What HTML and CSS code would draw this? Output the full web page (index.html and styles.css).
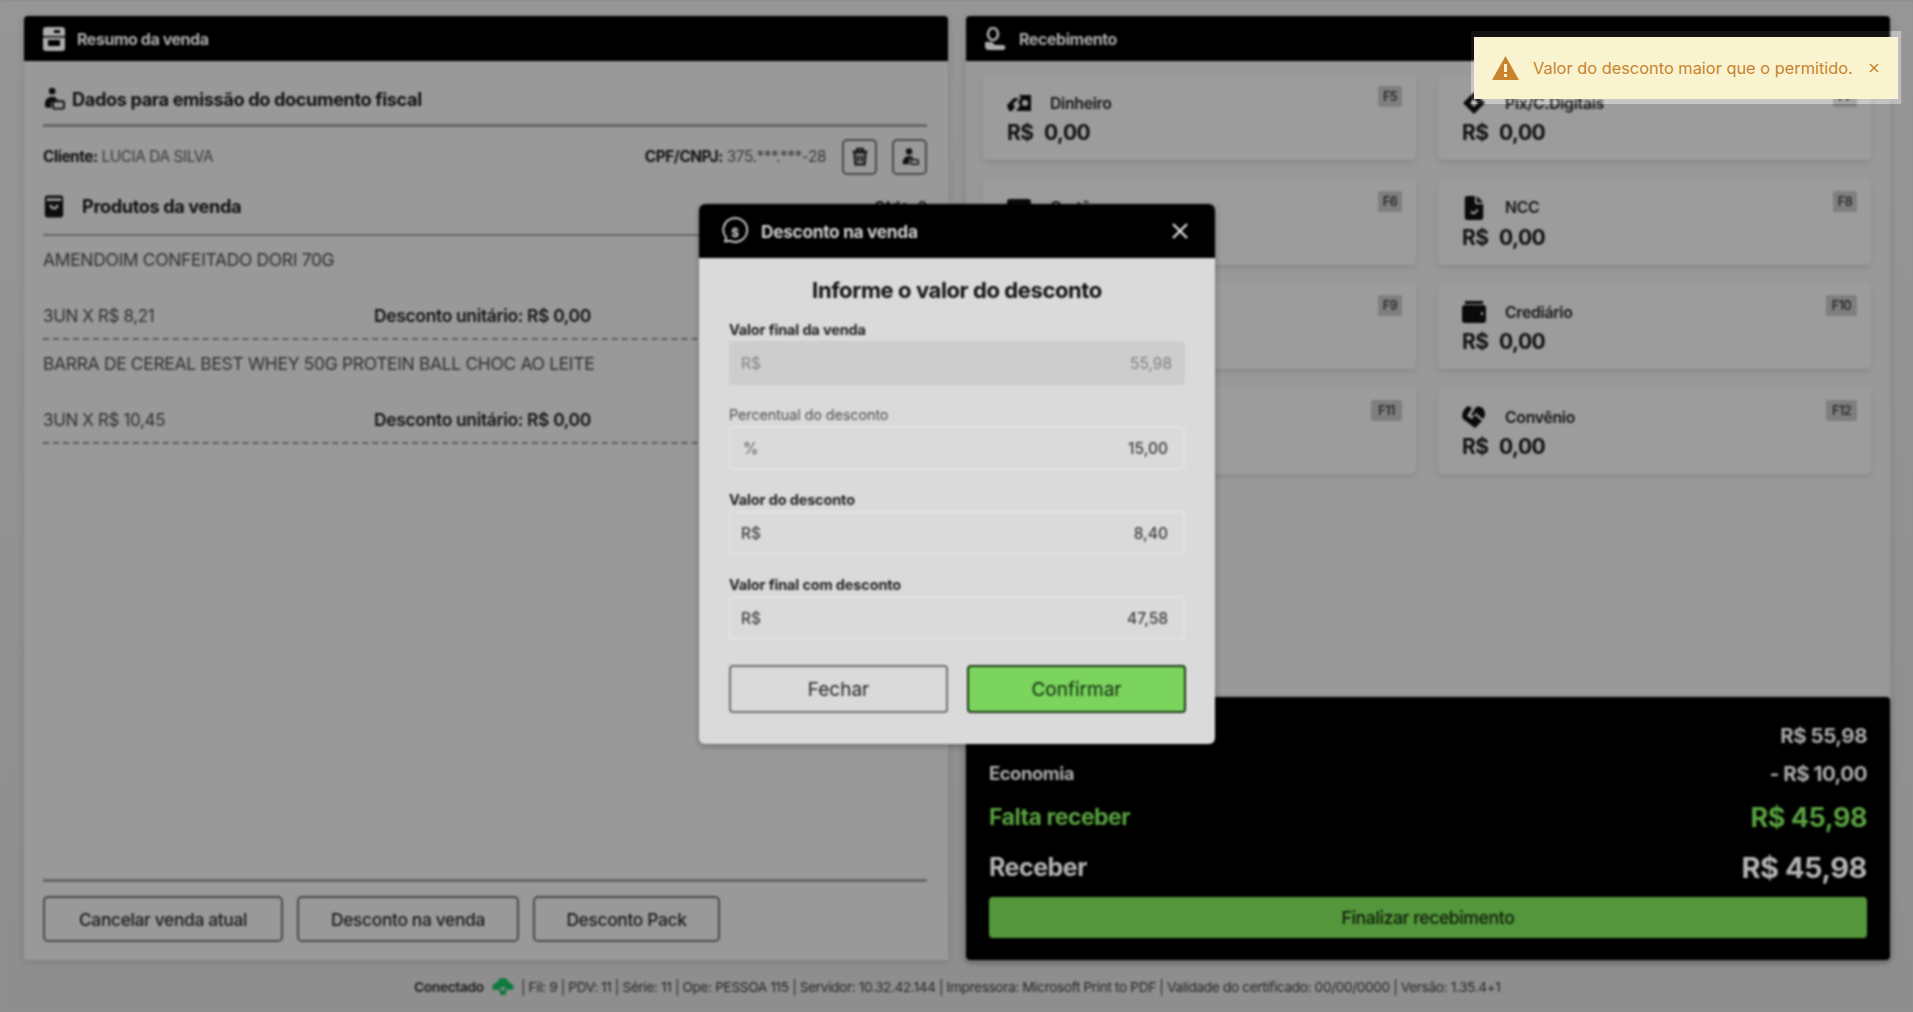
FILE: index.html
```html
<!DOCTYPE html>
<html lang="pt-BR">
<head>
<meta charset="utf-8">
<title>Desconto na venda</title>
<link rel="stylesheet" href="styles.css">
</head>
<body>
<div class="stage">
  <div class="app">
    <main class="columns">
      <section class="panel">
        <header class="bar">
          <svg class="bar-icon" viewBox="0 0 24 24"><path fill="currentColor" fill-rule="evenodd" d="M4 0h16a3 3 0 0 1 3 3v18a3 3 0 0 1-3 3H4a3 3 0 0 1-3-3V3a3 3 0 0 1 3-3zM1 9v1.500h22V9zM6 13v6h12v-6zM12 3v3h6V3z"/></svg>
          <span>Resumo da venda</span>
        </header>
        <div class="panel-body">
          <div class="section-head fiscal">
            <svg class="sec-icon" viewBox="0 0 24 24"><circle cx="10" cy="4" r="3.600" fill="currentColor"/><path fill="currentColor" d="M2 20c0-6 2-10 8-10 4 0 5.500 2 6 5h-4a3 3 0 0 0-3 3v4H4a2 2 0 0 1-2-2z"/><rect x="11" y="15" width="12" height="8" rx="1.500" fill="none" stroke="currentColor" stroke-width="2"/></svg>
            <h2>Dados para emissão do documento fiscal</h2>
          </div>
          <div class="client">
            <div><b>Cliente:</b> <span class="soft">LUCIA DA SILVA</span></div>
            <div class="client-right">
              <div><b>CPF/CNPJ:</b> <span class="soft">375.***.***-28</span></div>
              <button class="square"><svg viewBox="0 0 24 24"><path fill="none" stroke="currentColor" stroke-width="2.400" d="M6 7h12l-1 13H7zM4 6h16M9 5V3h6v2M10 10v7M14 10v7"/></svg></button>
              <button class="square"><svg viewBox="0 0 24 24"><circle cx="11" cy="6" r="3.500" fill="currentColor"/><path fill="currentColor" d="M4 19c0-5 3-8 7-8 3 0 4 1 5 3h-3a2 2 0 0 0-2 2v4H5a1 1 0 0 1-1-1z"/><rect x="13" y="15" width="8" height="5" rx="1" fill="none" stroke="currentColor" stroke-width="1.600"/></svg></button>
            </div>
          </div>
          <div class="section-head products">
            <svg class="sec-icon" viewBox="0 0 24 24"><path fill="currentColor" fill-rule="evenodd" d="M5 0h14a3 3 0 0 1 3 3v18a3 3 0 0 1-3 3H5a3 3 0 0 1-3-3V3a3 3 0 0 1 3-3zM4 3v3h16V3zM7 10c0 7 10 7 10 0h-2.500c0 3.500-5 3.500-5 0z"/></svg>
            <h2>Produtos da venda</h2>
            <span class="count">Qtde: 2</span>
          </div>
          <article class="item">
            <div class="item-name">AMENDOIM CONFEITADO DORI 70G</div>
            <div class="item-row"><span>3UN X R$ 8,21</span><b>Desconto unitário: R$ 0,00</b></div>
          </article>
          <article class="item">
            <div class="item-name">BARRA DE CEREAL BEST WHEY 50G PROTEIN BALL CHOC AO LEITE</div>
            <div class="item-row"><span>3UN X R$ 10,45</span><b>Desconto unitário: R$ 0,00</b></div>
          </article>
          <footer class="panel-foot">
            <button class="outline wide-a">Cancelar venda atual</button>
            <button class="outline wide-b">Desconto na venda</button>
            <button class="outline wide-c">Desconto Pack</button>
          </footer>
        </div>
      </section>

      <section class="panel">
        <header class="bar">
          <svg class="bar-icon" viewBox="0 0 24 24"><ellipse cx="9" cy="7" rx="5" ry="6" fill="none" stroke="currentColor" stroke-width="2.600"/><path fill="currentColor" d="M1 15h7l3 3h8a2.500 2.500 0 0 1 0 5H5a4 4 0 0 1-4-4z"/></svg>
          <span>Recebimento</span>
        </header>
        <div class="cards">
          <div class="card"><kbd>F5</kbd><div class="card-title"><svg viewBox="0 0 24 18"><path fill="currentColor" d="M0 11 7 4h5L6 10l2 3-3 4H2z"/><path fill="currentColor" fill-rule="evenodd" d="M12 1h12v16H9l3-4 1-2-2-3 3-4zM18 6a3 3 0 1 0 0 6 3 3 0 0 0 0-6z"/></svg><span>Dinheiro</span></div><div class="amount">R$ <i>0,00</i></div></div>
          <div class="card"><kbd>F7</kbd><div class="card-title"><svg viewBox="0 0 24 24"><path fill="currentColor" fill-rule="evenodd" d="M12 1 23 12 12 23 1 12zM12 8l-4 4 4 4 4-4z"/></svg><span>Pix/C.Digitais</span></div><div class="amount">R$ <i>0,00</i></div></div>
          <div class="card"><kbd>F6</kbd><div class="card-title"><svg viewBox="0 0 24 20"><rect y="1" width="24" height="18" rx="3" fill="currentColor"/></svg><span>Cartão</span></div><div class="amount">R$ <i>0,00</i></div></div>
          <div class="card"><kbd>F8</kbd><div class="card-title"><svg viewBox="0 0 20 26"><path fill="currentColor" fill-rule="evenodd" d="M3 0h8v7a2 2 0 0 0 2 2h7v14a3 3 0 0 1-3 3H3a3 3 0 0 1-3-3V3a3 3 0 0 1 3-3zM13 0l7 7h-7zM6 17c2 4 6 4 9-2l-2-1c-2 4-4 4-5 2z"/></svg><span>NCC</span></div><div class="amount">R$ <i>0,00</i></div></div>
          <div class="card"><kbd>F9</kbd><div class="card-title"><svg viewBox="0 0 24 24"><rect y="3" width="24" height="18" rx="3" fill="currentColor"/></svg><span>Cheque</span></div><div class="amount">R$ <i>0,00</i></div></div>
          <div class="card"><kbd class="wide">F10</kbd><div class="card-title"><svg viewBox="0 0 24 22"><path fill="currentColor" fill-rule="evenodd" d="M3 0h18v3H3zM3 4h18a3 3 0 0 1 3 3v12a3 3 0 0 1-3 3H3a3 3 0 0 1-3-3V7a3 3 0 0 1 3-3zM19 11v3h2v-3z"/></svg><span>Crediário</span></div><div class="amount">R$ <i>0,00</i></div></div>
          <div class="card"><kbd class="wide">F11</kbd><div class="card-title"><svg viewBox="0 0 24 24"><rect y="3" width="24" height="18" rx="3" fill="currentColor"/></svg><span>Vale</span></div><div class="amount">R$ <i>0,00</i></div></div>
          <div class="card"><kbd class="wide">F12</kbd><div class="card-title"><svg viewBox="0 0 24 24"><path fill="currentColor" fill-rule="evenodd" d="M6 1l4 2-5 8 5 3 3-4 7 6-7 7-12-9C-1 11 1 4 6 1zM14 2c4-2 9 1 9 7 0 2-1 4-2 5l-7-6-3 3-2-1z"/></svg><span>Convênio</span></div><div class="amount">R$ <i>0,00</i></div></div>
        </div>
        <div class="summary">
          <div class="sum-row"><span>Total</span><span>R$ 55,98</span></div>
          <div class="sum-row"><span>Economia</span><span>- R$ 10,00</span></div>
          <div class="sum-row due"><span>Falta receber</span><span>R$ 45,98</span></div>
          <div class="sum-row take"><span>Receber</span><span>R$ 45,98</span></div>
          <button class="finish">Finalizar recebimento</button>
        </div>
      </section>
    </main>
    <div class="status">
      <b>Conectado</b>
      <svg class="cloud" viewBox="0 0 24 20"><path fill="#0e7a3e" fill-rule="evenodd" d="M12 0c4 0 6 2.500 6.500 5 3 .5 5.500 2.500 5.500 5.500 0 1.500-1 2.500-2.500 2.500H16l-1 6H9l-1-6H2.500C1 13 0 12 0 10.500 0 7.500 2.500 5.500 5.500 5 6 2.500 8 0 12 0zM9 10l3 5 3-5z"/></svg>
      <span>| Fil: 9 | PDV: 11 | Série: 11 | Ope: PESSOA 115 | Servidor: 10.32.42.144 | Impressora: Microsoft Print to PDF | Validade do certificado: 00/00/0000 | Versão: 1.35.4+1</span>
    </div>
  </div>

  <div class="modal">
    <header class="modal-bar">
      <svg class="modal-icon" viewBox="0 0 28 28"><path fill="none" stroke="currentColor" stroke-width="1.800" d="M5 23.500l1-3.500a11.500 11.500 0 1 1 4 3z"/><text x="14.500" y="19" text-anchor="middle" class="dollar">$</text></svg>
      <span>Desconto na venda</span>
      <svg class="modal-close" viewBox="0 0 18 18"><path fill="none" stroke="currentColor" stroke-width="2.200" d="M2 2l14 14M16 2 2 16"/></svg>
    </header>
    <div class="modal-body">
      <h3>Informe o valor do desconto</h3>
      <label class="field-label">Valor final da venda</label>
      <div class="field disabled"><span>R$</span><span>55,98</span></div>
      <label class="field-label thin">Percentual do desconto</label>
      <div class="field"><span class="pct">%</span><span>15,00</span></div>
      <label class="field-label">Valor do desconto</label>
      <div class="field"><span>R$</span><span>8,40</span></div>
      <label class="field-label">Valor final com desconto</label>
      <div class="field"><span>R$</span><span>47,58</span></div>
      <div class="modal-actions">
        <button class="btn-close">Fechar</button>
        <button class="btn-ok">Confirmar</button>
      </div>
    </div>
  </div>
</div>

<div class="toast-halo">
  <div class="toast">
    <svg class="toast-icon" viewBox="0 0 27 24"><path fill="#c8842d" fill-rule="evenodd" d="M13.500 0 27 24H0zM12 8v8h3V8zM12 18v3h3v-3z"/></svg>
    <span>Valor do desconto maior que o permitido.</span>
    <svg class="toast-x" viewBox="0 0 10 10"><path fill="none" stroke="#c8842d" stroke-width="1.500" d="M1 1l8 8M9 1 1 9"/></svg>
  </div>
</div>
</body>
</html>
```
FILE: styles.css
```css
* { box-sizing: border-box; }
html, body { margin: 0; height: 100%; overflow: hidden; }
body { background: #909090; font-family: Inter, "Liberation Sans", sans-serif; color: #1f1f1f; }
button { font-family: inherit; }

.stage { position: relative; width: 1913px; height: 1012px; filter: blur(1px); }
.app { height: 100%; padding: 15px 23px 0 24px; display: flex; flex-direction: column; background: linear-gradient(#969696, #8e8e8e); border-top: 1px solid #858585; }
.columns { display: grid; grid-template-columns: 924px 924px; column-gap: 18px; height: 944px; }

.panel { background: #999; display: flex; flex-direction: column; box-shadow: 0 2px 8px rgba(0,0,0,.12); border-radius: 4px 4px 0 0; min-height: 0; }
.bar { height: 45px; background: #000; color: #adadad; display: flex; align-items: center; gap: 11px; padding-left: 18px; font-size: 16px; font-weight: 700; letter-spacing: -.45px; border-radius: 4px 4px 0 0; flex: none; margin-bottom: 1px; }
.bar-icon { width: 24px; height: 24px; }

.panel-body { flex: 1; display: flex; flex-direction: column; padding: 0 21px 17px 19px; min-height: 0; }
.section-head { display: flex; align-items: center; border-bottom: 3px solid #666; color: #111; }
.section-head h2 { margin: 0; font-size: 18.200px; font-weight: 700; letter-spacing: -.4px; }
.sec-icon { width: 22px; height: 23px; color: #0d0d0d; flex: none; }
.fiscal { height: 65px; padding-top: 11px; gap: 7px; }
.products { height: 60px; padding-top: 2px; gap: 17px; border-bottom-width: 2px; }
.count { margin-left: auto; font-size: 15px; font-weight: 600; }

.client { height: 49px; padding-top: 10px; display: flex; justify-content: space-between; align-items: center; font-size: 15.400px; letter-spacing: -.45px; flex: none; }
.client-right { display: flex; align-items: center; }
.client-right > div { margin-right: 16px; }
.client b { color: #111; }
.soft { color: #3a3a3a; }
.square { width: 35px; height: 36px; padding: 0; margin-left: 15px; background: none; border: 2px solid #4a4a4a; border-radius: 5px; display: flex; align-items: center; justify-content: center; color: #111; }
.client-right .square:first-of-type { margin-left: 0; }
.square svg { width: 22px; height: 22px; }

.item { height: 104px; padding-top: 12px; border-bottom: 2px dashed #5c5c5c; font-size: 17.500px; letter-spacing: -.36px; color: #2f2f2f; flex: none; }
.item-name { height: 24px; line-height: 24px; }
.item-row { margin-top: 32px; height: 24px; line-height: 24px; display: grid; grid-template-columns: 331px 1fr; }
.item-row span { font-size: 17px; }
.item-row b { color: #141414; font-weight: 600; }

.panel-foot { margin-top: auto; height: 64px; border-top: 3px solid #666; padding-top: 14px; display: flex; gap: 14px; }
.outline { height: 46px; background: none; border: 2px solid #4a4a4a; border-radius: 5px; font-size: 17.400px; letter-spacing: -.35px; font-weight: 500; color: #1a1a1a; padding: 0; }
.wide-a { width: 240px; }
.wide-b { width: 222px; }
.wide-c { width: 187px; }

.cards { display: grid; grid-template-columns: 433px 433px; column-gap: 22px; grid-auto-rows: 86px; row-gap: 18.700px; padding: 12px 0 0 17px; flex: none; }
.card { position: relative; background: #9c9c9c; border-radius: 5px; box-shadow: 0 3px 6px rgba(0,0,0,.1); padding: 17px 0 0 24px; }
.card-title { display: flex; align-items: center; height: 24px; gap: 19px; font-size: 15.800px; font-weight: 600; letter-spacing: -.3px; color: #141414; }
.card-title svg { width: 24px; height: 24px; color: #0a0a0a; flex: none; }
.amount { margin-top: 3px; font-size: 21px; line-height: 30px; font-weight: 700; letter-spacing: -.5px; color: #111; }
.amount i { font-style: normal; margin-left: 6px; }
.card kbd { position: absolute; top: 12px; right: 14px; width: 24px; height: 21px; background: #7f7f7f; border-radius: 2px; font: 600 12.500px/21px Inter, "Liberation Sans", sans-serif; letter-spacing: -.5px; text-align: center; color: #2a2a2a; }
.card kbd.wide { width: 31px; }

.summary { margin-top: auto; height: 263px; background: #000; color: #ababab; border-radius: 4px; padding: 19px 23px 22px; display: flex; flex-direction: column; font-weight: 700; flex: none; box-shadow: 0 2px 6px rgba(0,0,0,.25); }
.sum-row { display: flex; justify-content: space-between; align-items: center; height: 38px; font-size: 20.500px; letter-spacing: -.5px; }
.sum-row:nth-child(2) span:first-child { font-size: 18.500px; }
.sum-row.due { height: 50px; font-size: 23px; color: #58a03f; }
.sum-row.due span:last-child { font-size: 27px; }
.sum-row.take { height: 50px; font-size: 25px; color: #b5b5b5; }
.sum-row.take span:last-child { font-size: 29px; }
.finish { margin-top: 5px; height: 41px; flex: none; background: #53963b; border: 0; border-radius: 4px; font-size: 17.600px; font-weight: 500; letter-spacing: -.4px; color: #0f1c0a; padding-bottom: 2px; }

.status { height: 52px; display: flex; align-items: center; padding: 2px 0 0 390px; font-size: 13.700px; letter-spacing: -.38px; color: #262626; white-space: nowrap; }
.status b { font-weight: 700; }
.cloud { width: 22px; height: 18px; margin: 0 7px 0 8px; }

.modal { position: absolute; left: 699px; top: 204px; width: 516px; height: 540px; background: #dadada; border-radius: 6px; box-shadow: 0 2px 6px rgba(0,0,0,.3); overflow: hidden; }
.modal-bar { height: 54px; background: #000; color: #d0d0d0; display: flex; align-items: center; padding: 0 26px 0 21px; gap: 12px; font-size: 17.300px; font-weight: 700; letter-spacing: -.3px; }
.modal-icon { width: 29px; height: 29px; }
.dollar { font: 700 12px Inter, "Liberation Sans", sans-serif; fill: currentColor; }
.modal-close { width: 18px; height: 18px; margin-left: auto; color: #e6e6e6; }
.modal-body { padding: 0 30px; }
.modal-body h3 { margin: 0; height: 60px; padding-top: 14px; line-height: 36px; font-size: 22px; font-weight: 700; letter-spacing: -.4px; text-align: center; color: #111; }
.field-label { display: block; height: 23px; padding-top: 1px; line-height: 22px; font-size: 14.500px; font-weight: 700; letter-spacing: -.15px; color: #1f1f1f; }
.field-label.thin { font-weight: 400; color: #4f4f4f; }
.field { height: 44px; margin-bottom: 18px; display: flex; align-items: center; justify-content: space-between; padding: 0 15px 0 10px; border: 2px solid #e3e3e3; border-radius: 4px; font-size: 15.500px; font-weight: 500; color: #3f3f3f; }
.field .pct { margin-left: 2px; color: #666; }
.field.disabled { background: #cdcdcd; border-color: #cdcdcd; color: #828282; padding-right: 11px; font-weight: 400; }
.modal-actions { display: grid; grid-template-columns: 219px 219px; column-gap: 19px; margin-top: 25px; }
.modal-actions button { height: 48px; border-radius: 4px; font-size: 19px; }
.btn-close { background: none; border: 2px solid #707070; color: #222; }
.btn-ok { background: #7ad45d; border: 2px solid #1e3a16; color: #14290e; }

.toast-halo { position: absolute; left: 1471px; top: 31px; width: 431px; height: 73px; padding: 6px 4px 5px 3px; background: rgba(255,255,255,.07); backdrop-filter: brightness(1.25); }
.toast { height: 62px; background: #faf3cf; color: #c8842d; display: flex; align-items: center; padding-left: 18px; font-size: 16.400px; letter-spacing: -.01px; }
.toast-icon { width: 27px; height: 24px; margin-right: 14px; flex: none; }
.toast-x { width: 10px; height: 10px; margin-left: 16px; }
```
